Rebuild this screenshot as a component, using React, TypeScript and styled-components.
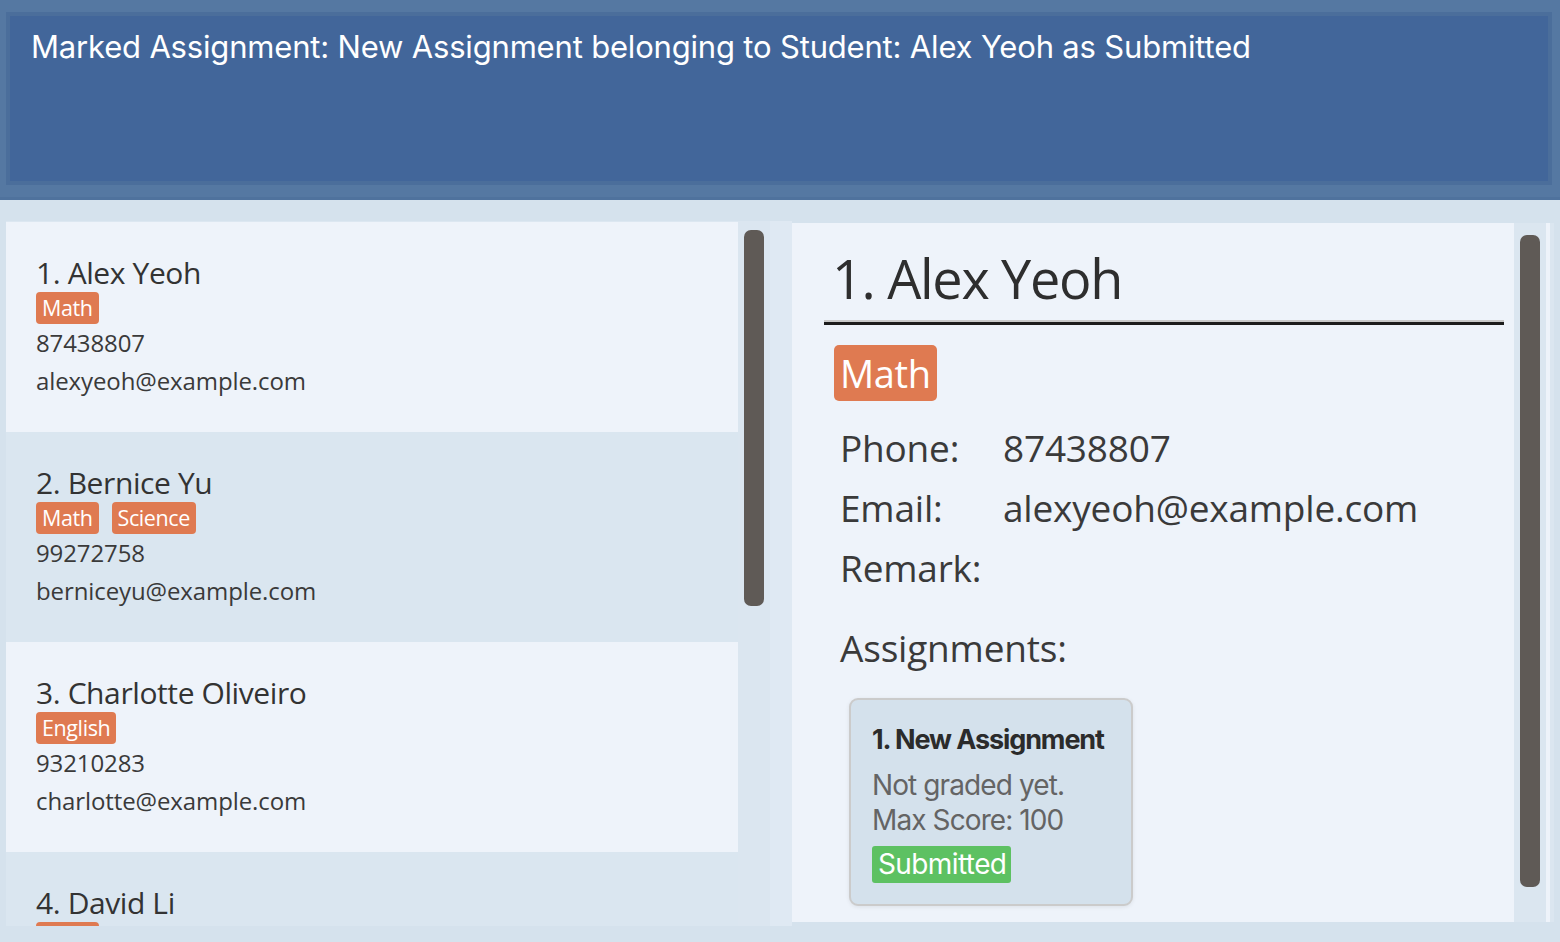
import React from "react";
import styled, { createGlobalStyle } from "styled-components";

const Global = createGlobalStyle`
  html, body { margin: 0; padding: 0; }
  body { width: 1560px; height: 942px; overflow: hidden; background: #d5e2ed; }
  * { box-sizing: border-box; }
`;

const Root = styled.div`
  width: 1560px;
  height: 942px;
  display: flex;
  flex-direction: column;
  background: #d5e2ed;
`;

const Header = styled.div`
  height: 200px;
  background: #5578a2;
  padding: 12px 8px 12px 6px;
  border-bottom: 3px solid #4f729d;
`;

const ResultBox = styled.div`
  height: 100%;
  background: #42669a;
  border: 4px solid #4b6e9b;
  padding: 11px 21px;
  color: #ffffff;
  font-family: Inter, "Liberation Sans", sans-serif;
  font-size: 31px;
  letter-spacing: -0.18px;
  line-height: 40px;
`;

const Main = styled.div`
  flex: 1;
  display: flex;
  padding: 21px 10px 16px 6px;
  min-height: 0;
`;

const ListPane = styled.div`
  width: 764px;
  display: flex;
  background: #dce7f1;
  overflow: hidden;
`;

const Cells = styled.div`
  width: 732px;
  padding-top: 1px;
  overflow: hidden;
`;

const Cell = styled.div<{ $alt: boolean }>`
  height: 210px;
  flex-shrink: 0;
  background: ${(p) => (p.$alt ? "#dae6f0" : "#eef3fa")};
  padding: 32px 30px 0 30px;
  display: flex;
  flex-direction: column;
  font-family: "Open Sans", "Noto Sans", sans-serif;
  color: #333333;
`;

const CellName = styled.div`
  font-size: 30px;
  line-height: 38px;
  letter-spacing: -0.4px;
`;

const TagRow = styled.div<{ $gap?: number }>`
  display: flex;
  gap: ${(p) => p.$gap ?? 13}px;
`;

const Tag = styled.span<{ $big?: boolean }>`
  background: #df7a51;
  color: #ffffff;
  border-radius: ${(p) => (p.$big ? "5px" : "4px")};
  font-family: "Open Sans", "Noto Sans", sans-serif;
  font-size: ${(p) => (p.$big ? "38px" : "21.5px")};
  line-height: ${(p) => (p.$big ? "56px" : "32px")};
  padding: 0 6px;
  letter-spacing: -0.4px;
`;

const CellLine = styled.div`
  font-size: 24px;
  line-height: 38px;
  letter-spacing: -0.1px;
  color: #3a3a3a;
`;

const Track = styled.div<{ $pad: string }>`
  width: 32px;
  flex-shrink: 0;
  background: #dbe6f0;
  padding: ${(p) => p.$pad};
`;

const Thumb = styled.div<{ $h: number }>`
  height: ${(p) => p.$h}px;
  width: 20px;
  border-radius: 7px;
  background: #5f5a56;
`;

const Divider = styled.div`
  width: 22px;
  background: #dfe9f3;
`;

const DetailPane = styled.div`
  flex: 1;
  display: flex;
  background: #eef3fa;
  margin-top: 2px;
  margin-bottom: 4px;
  border-right: 4px solid #eef3fa;
  box-shadow: 4px 0 0 #dbe6f0;
`;

const Detail = styled.div`
  flex: 1;
  padding: 15px 10px 0 32px;
  font-family: "Open Sans", "Noto Sans", sans-serif;
  color: #333333;
`;

const BigName = styled.div`
  font-size: 54px;
  line-height: 80px;
  padding-left: 8px;
  letter-spacing: -1.3px;
  color: #2e2e2e;
  border-bottom: 3px solid #1c1c1c;
  box-shadow: 0 -2px 0 #c9c9c9 inset;
  padding-bottom: 4px;
`;

const DetailBody = styled.div`
  padding: 20px 0 0 10px;
`;

const InfoGrid = styled.div`
  display: grid;
  grid-template-columns: 163px 1fr;
  margin-top: 17px;
  font-size: 37px;
  line-height: 60px;
  color: #3a3a3a;
  letter-spacing: -0.2px;
  padding-left: 6px;
`;

const SectionTitle = styled.div`
  font-size: 37px;
  line-height: 60px;
  margin-top: 20px;
  padding-left: 6px;
  color: #3a3a3a;
  letter-spacing: -0.2px;
`;

const Card = styled.div`
  margin: 20px 0 0 15px;
  width: 284px;
  height: 208px;
  background: #d4e1ec;
  border: 2px solid #cbcbcb;
  border-radius: 9px;
  box-shadow: 0 1px 4px rgba(0, 0, 0, 0.08);
  padding: 20px 10px 0 21px;
  font-family: Inter, "Liberation Sans", sans-serif;
`;

const CardTitle = styled.div`
  font-size: 27px;
  font-weight: 700;
  letter-spacing: -1.1px;
  color: #2b2b2b;
  line-height: 40px;
  white-space: nowrap;
  margin-bottom: 8px;
`;

const CardLine = styled.div`
  font-size: 28px;
  color: #646464;
  letter-spacing: -0.9px;
  line-height: 35px;
`;

const Status = styled.span`
  display: inline-block;
  margin-top: 8px;
  background: #5dc162;
  color: #ffffff;
  border-radius: 3px;
  font-size: 28px;
  line-height: 37px;
  padding: 0 5px 0 6px;
  letter-spacing: -0.6px;
`;

const people = [
  { name: "1. Alex Yeoh", tags: ["Math"], phone: "87438807", email: "alexyeoh@example.com" },
  { name: "2. Bernice Yu", tags: ["Math", "Science"], phone: "99272758", email: "berniceyu@example.com" },
  { name: "3. Charlotte Oliveiro", tags: ["English"], phone: "93210283", email: "charlotte@example.com" },
  { name: "4. David Li", tags: ["Math"], phone: "91031282", email: "lidavid@example.com" },
];

export default function App() {
  return (
    <Root>
      <Global />
      <Header>
        <ResultBox>Marked Assignment: New Assignment belonging to Student: Alex Yeoh as Submitted</ResultBox>
      </Header>
      <Main>
        <ListPane>
          <Cells>
            {people.map((p, i) => (
              <Cell key={p.name} $alt={i % 2 === 1}>
                <CellName>{p.name}</CellName>
                <TagRow>
                  {p.tags.map((t) => (
                    <Tag key={t}>{t}</Tag>
                  ))}
                </TagRow>
                <CellLine>{p.phone}</CellLine>
                <CellLine>{p.email}</CellLine>
              </Cell>
            ))}
          </Cells>
          <Track $pad="9px 6px">
            <Thumb $h={376} />
          </Track>
        </ListPane>
        <Divider />
        <DetailPane>
          <Detail>
            <BigName>1. Alex Yeoh</BigName>
            <DetailBody>
              <TagRow>
                <Tag $big>Math</Tag>
              </TagRow>
              <InfoGrid>
                <span>Phone:</span>
                <span>87438807</span>
                <span>Email:</span>
                <span>alexyeoh@example.com</span>
                <span>Remark:</span>
                <span></span>
              </InfoGrid>
              <SectionTitle>Assignments:</SectionTitle>
              <Card>
                <CardTitle>1. New Assignment</CardTitle>
                <CardLine>Not graded yet.</CardLine>
                <CardLine>Max Score: 100</CardLine>
                <Status>Submitted</Status>
              </Card>
            </DetailBody>
          </Detail>
          <Track $pad="12px 6px">
            <Thumb $h={652} />
          </Track>
        </DetailPane>
      </Main>
    </Root>
  );
}
